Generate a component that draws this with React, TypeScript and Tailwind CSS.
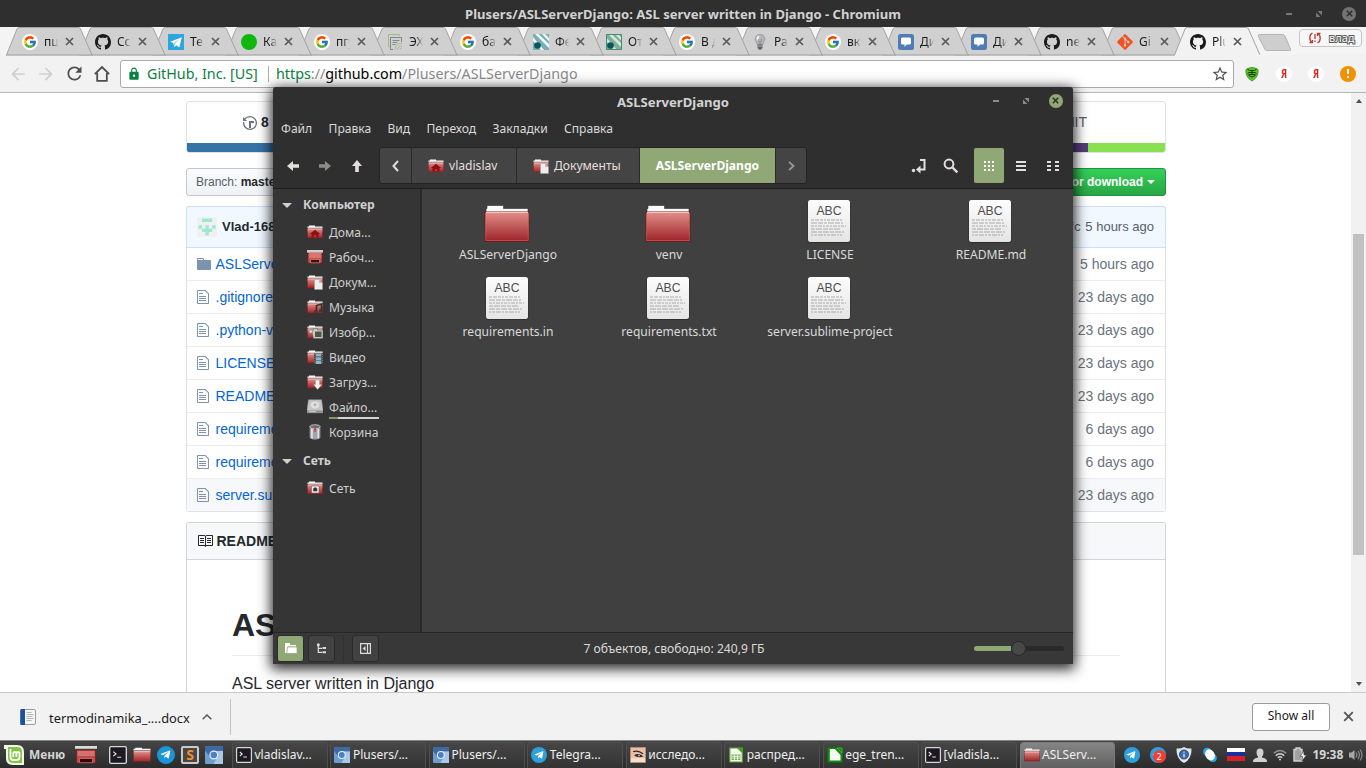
import React from "react";
import { FcGoogle } from "react-icons/fc";
import { FaGitAlt, FaTelegramPlane } from "react-icons/fa";
import { MdArrowBack, MdArrowForward, MdRefresh, MdLock, MdStarBorder } from "react-icons/md";

type Kids = { children?: React.ReactNode };

const OCTO = {
  history:
    "M8 13H6V6h5v2H8v5zM7 1C4.81 1 2.87 2.02 1.59 3.59L0 2v4h4L2.5 4.5C3.55 3.17 5.17 2.3 7 2.3c3.14 0 5.7 2.56 5.7 5.7s-2.56 5.7-5.7 5.7A5.71 5.71 0 0 1 1.3 8c0-.34.03-.67.09-1H.08C.03 7.33 0 7.66 0 8c0 3.86 3.14 7 7 7s7-3.14 7-7-3.14-7-7-7z",
  file: "M6 5H2V4h4v1zM2 8h7V7H2v1zm0 2h7V9H2v1zm0 2h7v-1H2v1zm10-7.5V14c0 .55-.45 1-1 1H1c-.55 0-1-.45-1-1V2c0-.55.45-1 1-1h7.5L12 4.5zM11 5L8 2H1v12h10V5z",
  folder:
    "M13 4H7V3c0-.66-.31-1-1-1H1c-.55 0-1 .45-1 1v10c0 .55.45 1 1 1h12c.55 0 1-.45 1-1V5c0-.55-.45-1-1-1zM6 4H1V3h5v1z",
  book: "M3 5h4v1H3V5zm0 3h4V7H3v1zm0 2h4V9H3v1zm11-5h-4v1h4V5zm0 2h-4v1h4V7zm0 2h-4v1h4V9zm2-6v9c0 .55-.45 1-1 1H9.5l-1 1-1-1H2c-.55 0-1-.45-1-1V3c0-.55.45-1 1-1h5.5l1 1 1-1H15c.55 0 1 .45 1 1zm-8 .5L7.5 3H2v9h6V3.5zm7-.5H9.500l-.5.5V12h6V3z",
  mark: "M8 0C3.58 0 0 3.58 0 8c0 3.54 2.29 6.53 5.47 7.59.4.07.55-.17.55-.38 0-.19-.01-.82-.01-1.49-2.01.37-2.53-.49-2.69-.94-.09-.23-.48-.94-.82-1.13-.28-.15-.68-.52-.01-.53.63-.01 1.08.58 1.23.82.72 1.21 1.87.87 2.33.66.07-.52.28-.87.51-1.07-1.78-.2-3.64-.89-3.64-3.95 0-.87.31-1.59.82-2.15-.08-.2-.36-1.02.08-2.12 0 0 .67-.21 2.2.82.64-.18 1.32-.27 2-.27.68 0 1.36.09 2 .27 1.53-1.04 2.2-.82 2.2-.82.44 1.1.16 1.92.08 2.12.51.56.82 1.27.82 2.15 0 3.07-1.87 3.75-3.65 3.95.29.25.54.73.54 1.48 0 1.07-.01 1.93-.01 2.2 0 .21.15.46.55.38A8.013 8.013 0 0 0 16 8c0-4.42-3.58-8-8-8z",
};

function Octicon({ d, w, className }: { d: string; w: number; className?: string }) {
  return (
    <svg width={w} height="16" viewBox={`0 0 ${w} 16`} className={className} fill="currentColor">
      <path d={d} />
    </svg>
  );
}

/* ---------- favicons ---------- */

function Favicon({ kind }: { kind: string }) {
  switch (kind) {
    case "google":
      return (
        <span className="flex size-4 items-center justify-center rounded-full bg-white">
          <FcGoogle size={14} />
        </span>
      );
    case "github":
      return <Octicon d={OCTO.mark} w={16} className="text-[#1b1b1b]" />;
    case "telegram":
      return (
        <svg width="16" height="16" viewBox="0 0 16 16">
          <path fill="#2ca5e0" d="M0 0h16v16H0z" />
          <path fill="#fff" d="M13.8 3.3 2.2 7.8l3 1.3 1.3 4 1.8-1.9 3 2.2z" />
          <path fill="#a9d5ef" d="m5.2 9.1 6.4-4-4.6 4.9-.5 3.1z" />
        </svg>
      );
    case "green":
      return <span className="size-4 rounded-full bg-[#0fb70f]" />;
    case "notes":
      return (
        <svg width="16" height="16" viewBox="0 0 16 16" fill="none">
          <path stroke="#9fc07c" d="M3 12.500H1.500V.5h11V2" />
          <path stroke="#7e8b8c" d="M6 15.500H3.500v-12h11V8M5.500 6.500h7M5.500 8.500h5M5.500 10.500h3" />
          <path stroke="#9fc07c" d="M8 15.500c0-4 3-6 7-6M10.500 15.500c0-2 2-3.500 4.500-3.500M13 15.500c0-1 1-1.500 2-1.500" />
        </svg>
      );
    case "teal":
    case "teal2":
      return (
        <svg width="16" height="16" viewBox="0 0 16 16">
          <path fill={kind === "teal" ? "#76afb5" : "#7fb09c"} d="M0 0h16v16H0z" />
          <path fill={kind === "teal" ? "#f4f7f6" : "#d6e8d8"} d="M2 0h3.500L16 10v4zM9 0h3l4 4v3.500zM0 3l11 13H8L0 7z" />
          <circle cx="4.500" cy="11.500" r="3.300" fill="#0b5560" />
          {kind === "teal2" && <path fill="none" stroke="#468a78" d="M.5.5h15v15H.5z" />}
        </svg>
      );
    case "bulb":
      return (
        <svg width="16" height="16" viewBox="0 0 16 16">
          <path fill="#b6b6ba" stroke="#8d8d92" strokeWidth=".7" d="M8 .5c3 0 4.800 2 4.800 4.500 0 2-1.500 3-2 5.500H5.200c-.5-2.500-2-3.500-2-5.500C3.200 2.500 5 .5 8 .5z" />
          <path fill="#fff" opacity=".8" d="M5 2.500c1-1 2-1 2.500-.5L6 7 4.500 5z" />
          <path fill="#66666c" d="M5.500 10.500h5v3.500L9 15.700H7L5.500 14z" />
          <path stroke="#a8a8ad" d="M5.500 12h5" />
          <path stroke="#77777b" strokeWidth=".6" fill="none" d="m6.500 5 1 5M9.500 5l-1 5" />
        </svg>
      );
    case "chat":
      return (
        <svg width="16" height="16" viewBox="0 0 16 16">
          <rect width="16" height="16" rx="2.500" fill="#4f7db3" />
          <path fill="#fff" d="M4.500 3.500h7a1.500 1.500 0 0 1 1.500 1.500v4a1.500 1.500 0 0 1-1.500 1.500H9l-2.500 2.300v-2.300h-2A1.500 1.500 0 0 1 3 9V5a1.500 1.500 0 0 1 1.500-1.500z" />
        </svg>
      );
    default:
      return <FaGitAlt size={18} color="#f4511e" className="-ml-px -mr-px shrink-0" />;
  }
}

const TABS: [string, string][] = [
  ["google", "пц"],
  ["github", "Cc"],
  ["telegram", "Те"],
  ["green", "Ка"],
  ["google", "пгу"],
  ["notes", "ЭХ"],
  ["google", "ба"],
  ["teal", "Фе"],
  ["teal2", "От"],
  ["google", "В д"],
  ["bulb", "Ра"],
  ["google", "вк"],
  ["chat", "Ди"],
  ["chat", "Ди"],
  ["github", "ne"],
  ["git", "Gi"],
  ["github", "Plu"],
];

function Cross({ size = 9, color = "#5a5a5a", w = 1.7 }: { size?: number; color?: string; w?: number }) {
  return (
    <svg width={size} height={size} viewBox="0 0 9 9" className="shrink-0">
      <path d="M1 1l7 7M8 1L1 8" stroke={color} strokeWidth={w} />
    </svg>
  );
}

function TabStrip() {
  return (
    <div className="flex h-7 shrink-0 bg-[#f4f4f4] pl-1.5">
      {TABS.map(([icon, label], i) => {
        const active = i === TABS.length - 1;
        return (
          <div key={i} className="relative h-7 w-[73px] shrink-0" style={{ zIndex: active ? 40 : 30 - i }}>
            <svg width="87" height="29" className="absolute left-0 top-0 overflow-visible">
              <path d="M.5 28.500 11 2q.8-1.500 2.300-1.500h59q1.500 0 2.200 1.500L86 28.500z" fill={active ? "#f2f2f2" : "#d0d0d0"} />
              <path d="M.5 28 11 2q.8-1.500 2.300-1.500h59q1.500 0 2.200 1.500L86 28" fill="none" stroke="#a3a3a3" />
              {!active && <path d="M0 28h87" stroke="#a0a0a0" />}
              {active && <path d="M1 28.300h84.500" stroke="#f2f2f2" strokeWidth="1.500" />}
            </svg>
            <div className="relative flex h-7 items-center pl-4 pt-[1px]">
              <Favicon kind={icon} />
              <span className="ml-[6px] w-[15px] shrink-0 overflow-hidden whitespace-nowrap text-[12px] leading-5 text-[#1a1a1a] [mask-image:linear-gradient(to_right,#000_45%,transparent_95%)]">
                {label}
              </span>
              <span className="ml-[6px] flex">
                <Cross />
              </span>
            </div>
          </div>
        );
      })}
      <div className="flex flex-1 items-start justify-between pr-[4px]">
        <svg width="36" height="18" className="ml-[9px] mt-[7px]">
          <path d="M2.500.5h23q1.800 0 2.500 1.500l5.500 13q.6 1.500-1 1.500H10q-1.600 0-2.200-1.300L1.300 2Q.8.5 2.500.5z" transform="translate(1 0)" fill="#cecece" stroke="#b4b4b4" />
        </svg>
        <div className="mt-[2px] flex h-[18px] w-[63px] items-center rounded-sm border border-[#c4c4c4] bg-[#f7f7f7] pl-2">
          <svg width="14" height="12" viewBox="0 0 14 12" fill="none" stroke="#c0392b" strokeWidth="1.300">
            <path d="M4.500 1.200C1 2.500 1 8.500 4 10.200M1.500 10.500h3V8M9.500 10.800C13 9.500 13 3.500 10 1.800M12.500 1.500h-3V4M7 2v5M7 8.500V10" />
          </svg>
          <span className="ml-[7px] text-[11px] leading-4 text-[#fafafa] [-webkit-text-stroke:2px_#5c5c5c] [paint-order:stroke]">влад</span>
        </div>
      </div>
    </div>
  );
}

function Toolbar() {
  return (
    <div className="flex h-[38px] shrink-0 items-center border-b border-[#b5b5b5] bg-[#f2f2f2] pl-2">
      <div className="flex items-center gap-2">
        <MdArrowBack size={20} color="#cfcfcf" />
        <MdArrowForward size={20} color="#cfcfcf" />
        <MdRefresh size={21} color="#4e4e4e" />
        <svg width="18" height="18" viewBox="0 0 18 18" fill="none" stroke="#4e4e4e" strokeWidth="1.800">
          <path d="M1.800 9.200 9 2l7.200 7.200M4.200 8v7.800h9.600V8" />
        </svg>
      </div>
      <div className="ml-[9px] flex h-7 w-[1114px] items-center rounded-[3px] border border-[#a9a9a9] bg-white pl-[6px]">
        <MdLock size={14} color="#0b8043" />
        <span className="ml-[6px] w-[113px] whitespace-nowrap text-[14.300px] text-[#0b8043]">GitHub, Inc. [US]</span>
        <span className="ml-[8px] h-4 w-px bg-[#b0b0b0]" />
        <span className="ml-[7px] whitespace-nowrap text-[14.300px] text-[#8a8a8a]">
          <span className="text-[#0b8043]">https</span>://<span className="text-black">github.com</span>/Plusers/ASLServerDjango
        </span>
        <MdStarBorder size={18} color="#505050" className="ml-auto mr-1" />
      </div>
      <div className="ml-[10px] flex items-center gap-4">
        <svg width="16" height="16" viewBox="0 0 16 16">
          <path fill="#5cc424" stroke="#3c8a1c" strokeWidth=".8" d="M2 3.500Q8-.5 14 3.500 15 11 8 15 1 11 2 3.500z" />
          <path stroke="#123c0a" fill="none" strokeWidth="1" d="M3.500 3l2 1.500h5l2-1.500M3.500 7.500l1.500-1h6l1.500 1M4.500 9.500q3.500 3 7 0M4.500 8.500h7M8 4.500v4" />
        </svg>
        {[0, 1].map((n) => (
          <span key={n} className="flex size-4 items-center justify-center rounded-full bg-white text-[12px] font-bold leading-none text-[#f01f1f]">
            <span className="scale-x-75">Я</span>
          </span>
        ))}
        <span className="flex size-4 flex-col items-center justify-center gap-[2px] rounded-full bg-[#f29100]">
          <span className="h-[5px] w-[2px] bg-white" />
          <span className="size-[2px] bg-white" />
        </span>
      </div>
    </div>
  );
}

/* ---------- repository page ---------- */

const ROWS: [string, string, string][] = [
  ["folder", "ASLServerDjango", "5 hours ago"],
  ["file", ".gitignore", "23 days ago"],
  ["file", ".python-version", "23 days ago"],
  ["file", "LICENSE", "23 days ago"],
  ["file", "README.md", "23 days ago"],
  ["file", "requirements.in", "6 days ago"],
  ["file", "requirements.txt", "6 days ago"],
  ["file", "server.sublime-project", "23 days ago"],
];

function Identicon() {
  return (
    <svg width="20" height="20" viewBox="0 0 20 20">
      <rect width="20" height="20" rx="2" fill="#f0f0f0" />
      <path fill="#9fe8cf" d="M5 1.500h10.200V5H5zM1.500 8.300H5v3.400H1.500zM15.200 8.300h3.400v3.400h-3.400zM8.400 8.300h3.400v3.400H8.400zM5 11.700h10.200v3.400H5zM8.400 15h3.400v3.500H8.400z" />
    </svg>
  );
}

function RepoPage() {
  return (
    <main className="flex h-[599px] shrink-0 overflow-hidden bg-white font-['Liberation_Sans',sans-serif]">
      <div className="flex w-[1166px] flex-col pl-[186px] pt-2">
        <section className="h-[52px] shrink-0 overflow-hidden rounded-[3px] border border-[#dfe2e5]">
          <div className="flex h-[41px] items-center justify-between pl-14 pr-[78px] text-[14px] text-[#586069]">
            <span className="flex items-center">
              <Octicon d={OCTO.history} w={14} className="text-[#6a737d]" />
              <b className="ml-[4px] text-[#24292e]">8</b>
            </span>
            <span>MIT</span>
          </div>
          <div className="flex h-[9px]">
            <span className="w-[760px] bg-[#3572a5]" />
            <span className="w-[141px] bg-[#563d7c]" />
            <span className="flex-1 bg-[#89e051]" />
          </div>
        </section>

        <div className="mt-[15px] flex h-7 shrink-0 justify-between">
          <div className="flex w-[130px] items-center rounded-[3px] border border-[#c5c8cb] bg-linear-to-b from-[#fafbfc] to-[#eff3f6] pl-[9px] text-[12px] text-[#586069]">
            Branch:&nbsp;<b className="text-[#24292e]">master</b>
          </div>
          <div className="flex w-[150px] items-center justify-end rounded-[3px] border border-[#229140] bg-linear-to-b from-[#34d058] to-[#28a745] pr-[10px] text-[12px] font-bold text-white">
            Clone or download
            <span className="ml-[4px] border-x-4 border-t-4 border-x-transparent border-t-white" />
          </div>
        </div>

        <section className="mt-[10px] flex shrink-0 flex-col rounded-[3px] border border-[#dfe2e5]">
          <div className="-mx-px -mt-px flex h-[42px] items-center justify-between rounded-t-[3px] border border-[#c8e1ff] bg-[#f1f8ff] px-[10px] text-[13px] text-[#586069]">
            <span className="flex items-center">
              <Identicon />
              <b className="ml-[5px] text-[#24292e]">Vlad-168</b>
            </span>
            <span className="pr-px">
              <span className="mr-[4px] font-['Liberation_Mono',monospace] text-[12px]">fc</span>5 hours ago
            </span>
          </div>
          {ROWS.map(([icon, name, age], i) => (
            <div
              key={name}
              className={
                "flex items-center justify-between pl-[10px] pr-[11px] text-[14px] text-[#6a737d] " +
                (i > 0 ? "h-[33px] border-t border-[#eaecef] " : "h-[32px] ") +
                (i === ROWS.length - 1 ? "bg-[#f6f8fa]" : "")
              }
            >
              <span className="flex items-center">
                <span className="flex w-[18.500px] text-[#7d94ae]">
                  <Octicon d={icon === "folder" ? OCTO.folder : OCTO.file} w={icon === "folder" ? 14 : 12} />
                </span>
                <span className="text-[#0366d6]">{name}</span>
              </span>
              <span>{age}</span>
            </div>
          ))}
        </section>

        <section className="mt-[10px] flex flex-1 shrink-0 flex-col rounded-t-[3px] border border-b-0 border-[#d1d5da]">
          <div className="flex h-[37px] shrink-0 items-center border-b border-[#d1d5da] bg-[#f6f8fa] pl-[10px] text-[14px] font-bold text-[#24292e]">
            <Octicon d={OCTO.book} w={16} />
            <span className="ml-[3.500px]">README.md</span>
          </div>
          <article className="mx-[45px] text-[16px] text-[#24292e]">
            <h1 className="mt-[45px] h-[51px] whitespace-nowrap border-b border-[#eaecef] text-[32px] font-bold leading-[40px]">ASLServerDjango</h1>
            <p className="mt-[16px] leading-6">ASL server written in Django</p>
          </article>
        </section>
      </div>
      <div className="ml-auto flex w-[15px] flex-col items-center bg-[#f1f1f1]">
        <span className="mt-[6px] border-x-[3.500px] border-b-4 border-x-transparent border-b-[#505050]" />
        <span className="mt-[131px] h-[321px] w-[11px] bg-[#c1c1c1]" />
        <span className="mb-[6px] mt-auto border-x-[3.500px] border-t-4 border-x-transparent border-t-[#505050]" />
      </div>
    </main>
  );
}

function DownloadShelf() {
  return (
    <footer className="flex h-[48px] shrink-0 items-center border-t border-[#c9c9c9] bg-[#f2f2f2]">
      <svg width="16" height="16" viewBox="0 0 16 16" className="ml-5">
        <rect x="2.500" y=".5" width="13" height="15" rx="1.500" fill="#f6f6f6" stroke="#9b9b9b" />
        <path fill="#1f4fa0" d="M1.500 0H5v16H1.500Q0 16 .2 14.500V1.500Q.2 0 1.500 0z" />
        <path stroke="#a5a5a5" strokeWidth=".8" d="M6.500 3.500h5M6.500 5.500h7M6.500 7.500h6M6.500 9.500h7M6.500 11.500h5" />
      </svg>
      <span className="ml-[13px] mt-[5px] w-[140px] whitespace-nowrap text-[12.850px] text-[#1a1a1a]">termodinamika_....docx</span>
      <svg width="10" height="6" viewBox="0 0 10 6" className="ml-[13px]">
        <path d="M.7 5.300 5 1l4.300 4.300" fill="none" stroke="#5a5a5a" strokeWidth="1.500" />
      </svg>
      <span className="ml-[18px] h-9 w-px bg-[#c4c4c4]" />
      <button className="ml-auto flex h-7 w-[78px] items-center justify-center rounded-[3px] border border-[#9c9c9c] bg-white pb-px text-[12px] text-[#1a1a1a]">
        Show all
      </button>
      <span className="ml-[13px] mr-[12px] flex">
        <Cross size={11} color="#555" w={1.5} />
      </span>
    </footer>
  );
}

/* ---------- file manager ---------- */

function RedFolder({ children, w = 16, h = 16 }: Kids & { w?: number; h?: number }) {
  return (
    <svg width={w} height={h} viewBox="0 0 16 16" className="shrink-0">
      <path d="M.5 2.500h1.500V1.500h6v1h7.500v5H.5z" fill="#fafafa" />
      <path d="M.5 4h15" stroke="#8f8f8f" strokeWidth=".7" />
      <rect x=".5" y="4.500" width="15" height="9.500" fill="url(#redFill)" stroke="#7d2020" strokeWidth=".5" />
      <path d="M1 5h14" stroke="#f2c4c2" strokeWidth=".9" />
      {children}
    </svg>
  );
}

function PlaceIcon({ kind }: { kind: string }) {
  switch (kind) {
    case "home":
      return (
        <RedFolder>
          <path fill="#8c1212" d="M8 5.800 2.800 10H4.500v3.500h2.300V11h2.400v2.500h2.300V10h1.700z" />
        </RedFolder>
      );
    case "desktop":
      return (
        <svg width="16" height="16" viewBox="0 0 16 16" className="shrink-0">
          <path fill="#c94f4f" stroke="#7d2020" strokeWidth=".6" d="M1 3h14v11H1z" />
          <path fill="#e08480" d="M2 4h12v5H2z" opacity=".7" />
          <path fill="#cfcfcf" d="M0 1h16v2.600H0z" />
          <path fill="#3b1113" stroke="#e79a96" strokeWidth=".6" d="M3.500 10.500h9v3.300h-9z" />
        </svg>
      );
    case "documents":
      return (
        <RedFolder>
          <path fill="#ededed" stroke="#999" strokeWidth=".4" d="M7.500 5.500h4.500l3.500 3.500V15.500h-8z" />
          <path fill="#bcbcbc" d="M12 5.500V9h3.500z" />
        </RedFolder>
      );
    case "music":
      return (
        <RedFolder>
          <path stroke="#303030" strokeWidth="1.600" fill="none" d="M9.500 13V6.500l5-1.500v6.500" />
          <circle cx="8.600" cy="13" r="1.700" fill="#3b3b3b" />
          <circle cx="13.600" cy="11.700" r="1.700" fill="#3b3b3b" />
        </RedFolder>
      );
    case "pictures":
      return (
        <RedFolder>
          <path fill="#c9c9c1" stroke="#64645e" strokeWidth=".6" d="M4.500 6h2V4.500h4V6H16v8.500H6.500z" />
          <path fill="#50544b" d="M8 7.500h6.500v5.500H8z" />
          <circle cx="3.800" cy="7.500" r="1.800" fill="#ddd" stroke="#777" strokeWidth=".6" />
        </RedFolder>
      );
    case "video":
      return (
        <RedFolder>
          <path fill="#3d4347" d="M7 4.500h9V15H7z" />
          <path fill="#8db5c4" d="M8.700 4.800h5.600v2.700H8.700zM8.700 8.200h5.600v3.200H8.700zM8.700 12h5.600v3H8.700z" />
          <path stroke="#999" strokeWidth=".7" strokeDasharray="1 1" d="M7.700 5v10M15.300 5v10" />
        </RedFolder>
      );
    case "downloads":
      return (
        <RedFolder>
          <path fill="#f4f4f4" stroke="#999" strokeWidth=".4" d="M8.500 6h4v4.500H15L10.500 15.500 6.500 10.500h2z" />
        </RedFolder>
      );
    case "disk":
      return (
        <svg width="16" height="16" viewBox="0 0 16 16" className="shrink-0">
          <path fill="#c6c6c6" stroke="#999" strokeWidth=".5" d="M1.500.8h13L16 11v2.800H0V11z" />
          <path fill="#8f8f8f" d="M0 11.500h16v2.300H0z" />
          <ellipse cx="8" cy="6" rx="5" ry="4.200" fill="#dedede" stroke="#aaa" strokeWidth=".5" />
          <circle cx="8" cy="5.800" r="1.300" fill="#aaa" />
          <path stroke="#eee" strokeWidth=".7" d="M2 12.700h7" />
        </svg>
      );
    case "trash":
      return (
        <svg width="16" height="16" viewBox="0 0 16 16" className="shrink-0">
          <path fill="#a2a2aa" stroke="#77777c" strokeWidth=".5" d="M2.800 2.500h10.400v11.500Q8 17 2.800 14z" />
          <ellipse cx="8" cy="2.700" rx="5.200" ry="2" fill="#6a6a70" stroke="#d0d0d4" strokeWidth=".8" />
          <path fill="#e0e0e5" d="M4 5h1.800v9.800L4 14.200zM10.500 5h1.500v9.200l-1.500.5z" />
          <path stroke="#c23a36" strokeWidth="1.200" fill="none" d="M8 3.500v4.500M7 5h2.200" />
        </svg>
      );
    default:
      return (
        <RedFolder>
          <path fill="#ededed" stroke="#555" strokeWidth=".5" d="M4.500 6h7.500v7H4.500z" />
          <path fill="#333" d="M6.200 8.300h4v3h-4zM7.200 7.500h2v1h-2z" />
        </RedFolder>
      );
  }
}

const PLACES: [string, string][] = [
  ["home", "Дома..."],
  ["desktop", "Рабоч..."],
  ["documents", "Докум..."],
  ["music", "Музыка"],
  ["pictures", "Изобр..."],
  ["video", "Видео"],
  ["downloads", "Загруз..."],
  ["disk", "Файло..."],
  ["trash", "Корзина"],
];

function PlaceHeader({ children }: Kids) {
  return (
    <div className="flex h-[31px] items-center pl-[9px] font-bold text-[#d0d0d0]">
      <span className="mr-[10px] mt-px border-x-[5.500px] border-t-[5.500px] border-x-transparent border-t-[#d0d0d0]" />
      <span className="pl-px">{children}</span>
    </div>
  );
}

function Place({ kind, label }: { kind: string; label: string }) {
  return (
    <div className="flex h-[25px] items-center pl-[34px] text-[#cfcfcf]">
      <span className="-mt-px flex">
        <PlaceIcon kind={kind} />
      </span>
      <span className="ml-[6px] flex w-[50px] flex-col whitespace-nowrap">
        {label}
        {kind === "disk" && (
          <span className="-mb-[2px] flex h-[2px] bg-[#d4d4d4]">
            <span className="w-[9px] bg-[#7d9d63]" />
          </span>
        )}
      </span>
    </div>
  );
}

function BigFolder() {
  return (
    <svg width="46" height="44" viewBox="0 0 46 44">
      <path d="M2 8V4.500h1V1.500h16.500v3H44V9H2z" fill="#fbfbfb" stroke="#2e2e2e" strokeWidth=".6" />
      <path d="M1 8h44v29.500H1z" fill="url(#redFill)" stroke="#6f1a1a" />
      <path d="M2 8.500h42" stroke="#f2c4c2" />
      <path d="M1.700 9v27.500h42.600V9" fill="none" stroke="#e09090" strokeWidth=".6" opacity=".6" />
    </svg>
  );
}

function TextDoc() {
  const dashes = ["3 1 4 1 3 1 2 1", "6 1 5 1 3 1", "3 1 2 1 4 1 2 1", "4 1 6 1 5 1", "6 1 4 1", "2 1 3 1 5 1"];
  const ends = [32, 33, 36, 31, 34, 32];
  return (
    <svg width="44" height="44" viewBox="0 0 44 44">
      <rect x=".5" y="1.500" width="43" height="42.500" rx="3" fill="#222" opacity=".6" />
      <rect x="1" y="1" width="42" height="42" rx="2.500" fill="url(#paper)" />
      <text x="22" y="15.700" textAnchor="middle" fontSize="12.500" fill="#4d4d4d" fontFamily="Liberation Sans, sans-serif" textLength="25" lengthAdjust="spacingAndGlyphs">
        ABC
      </text>
      {ends.map((e, i) => (
        <path key={i} d={`M4 ${21 + i * 3}H${e + 3}`} stroke="#999" strokeWidth=".8" strokeDasharray={dashes[i]} />
      ))}
    </svg>
  );
}

const FILES: [boolean, string][] = [
  [true, "ASLServerDjango"],
  [true, "venv"],
  [false, "LICENSE"],
  [false, "README.md"],
  [false, "requirements.in"],
  [false, "requirements.txt"],
  [false, "server.sublime-project"],
];

const MENU = ["Файл", "Правка", "Вид", "Переход", "Закладки", "Справка"];

function WindowButtons({ closeClass }: { closeClass: string }) {
  return (
    <div className="flex items-center">
      <span className="h-[2px] w-[6px] bg-[#8b8b8b]" />
      <svg width="6" height="6" viewBox="0 0 6 6" className="ml-[24px]">
        <path fill="#8b8b8b" d="M1.500 0H6v4.500zM0 1.500 4.500 6H0z" />
      </svg>
      <span className={"ml-[20px] flex size-[14px] items-center justify-center rounded-full " + closeClass}>
        <Cross size={7} color="#2f2f2f" w={2} />
      </span>
    </div>
  );
}

function FileManager() {
  return (
    <div className="absolute left-[273px] top-[87px] z-50 flex h-[577px] w-[800px] flex-col rounded-t-[3px] bg-[#2f2f2f] text-[12.100px] leading-[18px] text-[#dadada] shadow-[0_3px_13px_2px_rgba(0,0,0,0.85)]">
      <div className="grid h-[27px] grid-cols-3 items-center">
        <span />
        <span className="mt-[2px] text-center text-[13.100px] font-bold text-[#d2d2d2]">ASLServerDjango</span>
        <div className="flex justify-end pr-[10px]">
          <WindowButtons closeClass="bg-[#90a876]" />
        </div>
      </div>
      <nav className="flex h-[29px] items-center gap-[16.300px] pl-2">
        {MENU.map((m) => (
          <span key={m}>{m}</span>
        ))}
      </nav>
      <div className="flex h-[46px] shrink-0 items-center border-b border-[#1d1d1d] text-[#e4dfdf]">
        <div className="ml-[14px] flex items-center gap-[20px]">
          <svg width="12" height="12" viewBox="0 0 12 12" fill="#e4dfdf">
            <path d="M0 6l6-5v3.200h6v3.600H6V11z" />
          </svg>
          <svg width="12" height="12" viewBox="0 0 12 12" fill="#8e8a8a">
            <path d="M12 6 6 1v3.200H0v3.600h6V11z" />
          </svg>
          <svg width="12" height="12" viewBox="0 0 12 12" fill="#e4dfdf">
            <path d="M6 0 1 6h3.200v6h3.600V6H11z" />
          </svg>
        </div>
        <div className="ml-[16px] flex h-[37px] items-stretch rounded-[3px] border border-[#232323] bg-[#444]">
          <span className="flex w-[32px] items-center justify-center border-r border-[#2a2a2a]">
            <svg width="7" height="12" viewBox="0 0 7 12" fill="none" stroke="#e4dfdf" strokeWidth="2">
              <path d="M6 1 1.500 6 6 11" />
            </svg>
          </span>
          <span className="flex w-[105px] items-center border-r border-[#2a2a2a] pl-4">
            <PlaceIcon kind="home" />
            <span className="ml-[5px]">vladislav</span>
          </span>
          <span className="flex w-[123px] items-center border-r border-[#2a2a2a] pl-4">
            <PlaceIcon kind="documents" />
            <span className="ml-[5px]">Документы</span>
          </span>
          <span className="flex w-[135px] items-center justify-center bg-[#90a876] font-bold text-white">ASLServerDjango</span>
          <span className="flex w-[31px] items-center justify-center border-l border-[#2a2a2a]">
            <svg width="7" height="10" viewBox="0 0 7 10" fill="none" stroke="#999" strokeWidth="1.800">
              <path d="M1 .8 5.500 5 1 9.200" />
            </svg>
          </span>
        </div>
        <div className="ml-auto flex items-center pr-[14px]">
          <svg width="16" height="16" viewBox="0 0 16 16" fill="none" stroke="#e4dfdf" strokeWidth="2">
            <path d="M9 2h4.500v9.500H8" />
            <path d="M9.500 7.500v8L5 11.500z" fill="#e4dfdf" stroke="none" />
            <circle cx="2.500" cy="12.500" r="1.700" fill="#e4dfdf" stroke="none" />
          </svg>
          <svg width="16" height="16" viewBox="0 0 16 16" fill="none" stroke="#e4dfdf" className="ml-4">
            <circle cx="6" cy="6" r="4.400" strokeWidth="2" />
            <path d="m9.500 9.500 4.800 4.800" strokeWidth="2.400" />
          </svg>
          <span className="ml-[15px] flex h-[35px] w-[30px] items-center justify-center rounded-[2px] bg-[#90a876]">
            <svg width="10" height="10" viewBox="0 0 10 10" fill="#fff">
              <path d="M0 0h2v2H0zM4 0h2v2H4zM8 0h2v2H8zM0 4h2v2H0zM4 4h2v2H4zM8 4h2v2H8zM0 8h2v2H0zM4 8h2v2H4zM8 8h2v2H8z" />
            </svg>
          </span>
          <svg width="10" height="10" viewBox="0 0 10 10" fill="#e4dfdf" className="ml-3">
            <path d="M0 0h10v2H0zM0 4h10v2H0zM0 8h10v2H0z" />
          </svg>
          <svg width="14" height="10" viewBox="0 0 14 10" fill="#e4dfdf" className="ml-[20px] -mr-px">
            <path d="M1 0h4v2H1zM1 4h4v2H1zM1 8h4v2H1zM9 0h4v2H9zM9 4h4v2H9zM9 8h4v2H9z" />
          </svg>
        </div>
      </div>
      <div className="flex min-h-0 flex-1">
        <aside className="w-[149px] border-r-2 border-[#292929] bg-[#353535]">
          <PlaceHeader>Компьютер</PlaceHeader>
          {PLACES.map(([kind, label]) => (
            <Place key={kind} kind={kind} label={label} />
          ))}
          <PlaceHeader>Сеть</PlaceHeader>
          <Place kind="network" label="Сеть" />
        </aside>
        <div className="grid flex-1 auto-rows-[77px] grid-cols-[repeat(4,161px)] bg-[#404040] pl-[5px] pt-[10px]">
          {FILES.map(([dir, name]) => (
            <div key={name} className="flex flex-col items-center">
              <span className={dir ? "-ml-px mt-[5px] h-[39px]" : "-ml-px h-[44px]"}>{dir ? <BigFolder /> : <TextDoc />}</span>
              <span className="mt-[3px] whitespace-nowrap pl-px leading-[18px]">{name}</span>
            </div>
          ))}
        </div>
      </div>
      <div className="flex h-[32px] shrink-0 items-center border-t border-[#262626] bg-[#383838] pl-1 pr-[9px]">
        <span className="flex size-[27px] items-center justify-center rounded-[3px] border border-[#2b2b2b] bg-[#90a876]">
          <svg width="12" height="11" viewBox="0 0 12 11">
            <path fill="#fff" d="M0 0h5v2h6v1.500H2.500V10H0z" />
            <path fill="#fff" stroke="#90a876" strokeWidth=".7" d="M2.500 4h9.500v6.500H1.800z" />
          </svg>
        </span>
        <span className="ml-[4px] flex size-[27px] items-center justify-center rounded-[3px] border border-[#2a2a2a] bg-[#424242]">
          <svg width="11" height="11" viewBox="0 0 11 11" fill="#ddd">
            <circle cx="2.300" cy="1.700" r="1.500" />
            <path d="M1.700 2h1.200v2.700H6V6H2.900v2.700H6V10H1.700zM6.500 4H10v2H6.500zM6.500 8.300H10v2H6.500z" />
          </svg>
        </span>
        <span className="ml-[8px] h-[27px] w-px bg-[#313131]" />
        <span className="ml-[8px] flex size-[27px] items-center justify-center rounded-[3px] border border-[#2a2a2a] bg-[#424242]">
          <svg width="11" height="11" viewBox="0 0 11 11" fill="none" stroke="#ddd" strokeWidth="1.200">
            <path d="M.6.6h9.800v9.800H.6zM7.500.6v9.800" />
            <path fill="#ddd" stroke="none" d="M5.500 3v5L2.500 5.500z" />
          </svg>
        </span>
        <span className="flex-1 pr-[5px] text-center">7 объектов, свободно: 240,9 ГБ</span>
        <div className="flex w-[90px] items-center">
          <span className="h-[5px] w-[37px] rounded-l-full bg-[#90a876]" />
          <span className="size-[15px] shrink-0 rounded-full border border-[#262626] bg-[#484848]" />
          <span className="h-[5px] flex-1 rounded-r-full bg-[#2a2a2a]" />
        </div>
      </div>
    </div>
  );
}

/* ---------- taskbar ---------- */

function AppIcon({ kind, size = 16 }: { kind: string; size?: number }) {
  switch (kind) {
    case "terminal":
      return (
        <svg width={size} height={size} viewBox="0 0 16 16" className="shrink-0">
          <rect x=".6" y=".6" width="14.800" height="14.800" rx="1.200" fill="#1d1822" stroke="#d6d6d6" strokeWidth="1.200" />
          <path d="m3.800 5 2.400 2-2.400 2M7.300 10h3.500" fill="none" stroke="#e6e6e6" strokeWidth="1.100" />
        </svg>
      );
    case "chromium":
      return (
        <svg width={size} height={size} viewBox="0 0 16 16" className="shrink-0">
          <rect width="16" height="16" rx="1" fill="#6f9dd2" />
          <path fill="#3d6aa5" d="M0 0h16v4.500H8.500L4 9 0 4z" />
          <path fill="#a9c7e8" d="M8.500 4.500H16V16H7.500l3.500-6z" />
          <circle cx="7.800" cy="8" r="4" fill="#e6effa" />
          <circle cx="7.800" cy="8" r="2.900" fill="#4d80c0" />
        </svg>
      );
    case "telegram":
      return (
        <span className="flex size-4 shrink-0 items-center justify-center rounded-full bg-[#2ba0da]">
          <FaTelegramPlane size={10} color="#fff" className="-ml-px" />
        </span>
      );
    case "telegramBig":
      return (
        <span className="flex size-[18px] shrink-0 items-center justify-center rounded-full bg-[#1b95d8]">
          <FaTelegramPlane size={11} color="#fff" className="-ml-px" />
        </span>
      );
    case "eye":
      return (
        <svg width="16" height="16" viewBox="0 0 16 16" className="shrink-0">
          <path fill="#e9bfa5" stroke="#b58a72" strokeWidth=".6" d="M.3.300h15.400v15.400H.3z" />
          <path fill="#f7dccb" d="M1 11h14v4H1z" />
          <path fill="none" stroke="#3d2a22" strokeWidth="1.100" d="M3 4.800q5-2 10 2" />
          <path fill="#2c2c34" d="M4 8.300q4-3 9.500 1-5 2.500-9.500-1z" />
          <circle cx="9" cy="8.600" r="1.100" fill="#8aa4c4" />
        </svg>
      );
    case "calc":
      return (
        <svg width="16" height="16" viewBox="0 0 16 16" className="shrink-0">
          <path fill="#f7f7f7" stroke="#5aa02c" strokeWidth="1.200" d="M1.800 1h8l4.500 4.500V15H1.800z" />
          <path fill="#43a01b" d="M9.800.3H15v5.700z" />
          <path fill="#69b53c" d="M3.500 7.500h9V13h-9z" />
          <path stroke="#fff" strokeWidth=".8" d="M3.500 9.300h9M3.500 11.200h9M6.500 7.500V13M9.500 7.500V13" />
        </svg>
      );
    case "office":
      return (
        <svg width="16" height="16" viewBox="0 0 16 16" className="shrink-0">
          <path fill="#128a0e" stroke="#0b5f08" strokeWidth=".6" d="M.3.300h15.400v15.400H.3z" />
          <path fill="#f8f8f8" d="M2.800 2h5l5.700 6v5.500H2.800z" />
          <path fill="#128a0e" stroke="#9be08c" strokeWidth=".4" d="M10 1h5v5z" />
        </svg>
      );
    default:
      return <RedFolder w={size} h={size} />;
  }
}

const TASKS: [string, string][] = [
  ["terminal", "vladislav..."],
  ["chromium", "Plusers/..."],
  ["chromium", "Plusers/..."],
  ["telegram", "Telegra..."],
  ["eye", "исследо..."],
  ["calc", "распред..."],
  ["office", "ege_tren..."],
  ["terminal", "[vladisla..."],
  ["folder", "ASLServ..."],
];

function Taskbar() {
  return (
    <div className="flex h-[28px] shrink-0 items-center border-t border-[#858585] bg-linear-to-b from-[#454545] to-[#2b2b2b] text-[12px] text-[#f0f0f0]">
      <svg width="20" height="20" viewBox="0 0 20 20" className="ml-1">
        <path fill="#f2f5ec" d="M0 0h13q7 0 7 7v13H9q-7 0-7-7V4H0z" />
        <path fill="#82c341" d="M4 2h9q5 0 5 5v11H9.500Q4 18 4 12.500z" />
        <path fill="none" stroke="#fff" strokeWidth="1.800" d="M6.500 4v8q0 3 3 3h3q3 0 3-3V8.500q0-1.500-1.500-1.500t-1.600 1.500V12M12.400 9q0-2-1.600-2T9.300 8.500V12" />
      </svg>
      <span className="ml-[5px] w-[42px] text-[11.900px] font-bold text-[#d5d5d5]">Меню</span>
      <svg width="22" height="18" viewBox="0 0 22 18" className="ml-[4px]">
        <path fill="#c04848" stroke="#6f1a1a" strokeWidth=".6" d="M1.500 4h19v13h-19z" />
        <path fill="#dd827e" d="M2.500 5h17v5h-17z" opacity=".7" />
        <path fill="#dadada" d="M0 0h22v2.800H0z" />
        <path fill="#35090b" stroke="#e0908c" strokeWidth=".6" d="M4.500 12.500h13v4.200h-13z" />
      </svg>
      <div className="ml-[12px] flex w-[123px] items-center gap-[6px]">
        <AppIcon kind="terminal" size={18} />
        <AppIcon kind="folder" size={18} />
        <AppIcon kind="telegramBig" />
        <span className="flex size-[18px] items-center justify-center rounded-[2px] border-2 border-[#c9c9c9] bg-[#474747] text-[14px] font-bold leading-none text-[#f58b31]">S</span>
        <AppIcon kind="chromium" size={18} />
      </div>
      <div className="flex h-full w-[883.500px] items-end gap-[2.500px] pt-[1px]">
        {TASKS.map(([icon, label], i) => (
          <span
            key={i}
            className={
              "flex h-full min-w-0 flex-1 items-center whitespace-nowrap rounded-t-[4px] border border-b-0 pb-[2px] pl-[3px] " +
              (i === TASKS.length - 1 ? "border-[#7a7a7a] bg-linear-to-b from-[#858585] to-[#606060]" : "border-[#4f4f4f] bg-linear-to-b from-[#464646] to-[#333]")
            }
          >
            <AppIcon kind={icon} />
            <span className="ml-[2.500px]">{label}</span>
          </span>
        ))}
      </div>
      <div className="ml-[8px] flex items-center">
        <AppIcon kind="telegram" />
        <span className="relative ml-[10px] flex">
          <AppIcon kind="telegram" />
          <span className="absolute left-[3px] top-[3px] flex size-[13px] items-center justify-center rounded-full bg-[#f23c34] text-[9px] leading-none text-white">2</span>
        </span>
        <svg width="16" height="16" viewBox="0 0 16 16" className="ml-[10px]">
          <path fill="#e6e6e6" d="M8 0q3 2 7.500 1.500Q16 12 8 16 0 12 .5 1.500 5 2 8 0z" />
          <circle cx="8" cy="7.500" r="4.500" fill="#3a6db0" stroke="#24487c" />
          <path stroke="#cfe0f5" strokeWidth="1.400" d="M8 4.500v1.300M8 6.700V10.500" />
        </svg>
        <svg width="14" height="16" viewBox="0 0 14 16" className="ml-[11px]">
          <circle cx="4.200" cy="4.800" r="4" fill="#29a8e8" />
          <circle cx="9.800" cy="11" r="4" fill="#29a8e8" />
          <ellipse cx="7" cy="7.900" rx="4.600" ry="5.800" transform="rotate(-28 7 7.900)" fill="#fff" />
        </svg>
        <span className="ml-[10px] flex h-[13px] w-[18px] flex-col">
          <span className="h-[4px] bg-white" />
          <span className="h-[4px] bg-[#1a2ea0]" />
          <span className="flex-1 bg-[#d3222a]" />
        </span>
        <svg width="14" height="14" viewBox="0 0 14 14" fill="#d0d0d0" className="ml-[8px]">
          <path d="M7 .5q3.500 0 3.500 4 0 2.500-1.500 4v1q4.500.8 5 3.500v1H0v-1q.5-2.700 5-3.500v-1q-1.500-1.500-1.500-4 0-4 3.500-4z" />
        </svg>
        <svg width="14" height="12" viewBox="0 0 14 12" fill="none" stroke="#cfcfcf" strokeWidth="1.500" className="ml-[6px]">
          <path d="M.8 4.300q6.200-5.500 12.400 0" opacity=".6" />
          <path d="M2.800 6.600q4.200-3.600 8.400 0M4.800 8.700q2.200-1.800 4.400 0" />
          <circle cx="7" cy="10.500" r="1" fill="#cfcfcf" stroke="none" />
        </svg>
        <svg width="14" height="15" viewBox="0 0 14 15" className="ml-[6px]">
          <path fill="#a0a0a0" stroke="#d0d0d0" strokeWidth="1.400" d="M3 2.500V1h4v1.500h2V14H1V2.500z" />
          <path fill="#eee" stroke="#3a3a3a" strokeWidth=".6" d="M11 4 7 9.500h2.500L9 14l4.500-6H11z" />
        </svg>
        <span className="ml-[6px] w-[32px] font-bold text-[#d5d5d5]">19:38</span>
        <svg width="14" height="14" viewBox="0 0 14 14" fill="none" stroke="#8c8c8c" strokeWidth="1.200" className="ml-[4px]">
          <path fill="#a8a8a8" stroke="none" d="M0 4.500h2.500L5.500 2v10L2.500 9.500H0z" />
          <path d="M7 4.500q1.500 2.500 0 5M9 3q2.800 4 0 8M11 1.500q4 5.500 0 11" />
        </svg>
      </div>
    </div>
  );
}

export default function App() {
  return (
    <div className="relative flex h-[768px] w-[1366px] flex-col overflow-hidden bg-[#f2f2f2] font-['Noto_Sans',sans-serif]">
      <svg width="0" height="0" className="absolute">
        <defs>
          <linearGradient id="redFill" x1="0" y1="0" x2="0" y2="1">
            <stop offset="0" stopColor="#e58e8b" />
            <stop offset="1" stopColor="#9c2327" />
          </linearGradient>
          <linearGradient id="paper" x1="0" y1="0" x2="0" y2="1">
            <stop offset="0" stopColor="#fdfdfd" />
            <stop offset="1" stopColor="#e4e4e4" />
          </linearGradient>
        </defs>
      </svg>
      <header className="grid h-[27px] shrink-0 grid-cols-[1fr_auto_1fr] items-center bg-[#2f2f2f] pr-[10px]">
        <span />
        <span className="mt-[2px] whitespace-nowrap pl-[10px] text-[13.050px] font-bold text-[#d2d2d2]">
          Plusers/ASLServerDjango: ASL server written in Django - Chromium
        </span>
        <div className="flex justify-end opacity-80">
          <WindowButtons closeClass="bg-[#858585]" />
        </div>
      </header>
      <TabStrip />
      <Toolbar />
      <RepoPage />
      <DownloadShelf />
      <Taskbar />
      <FileManager />
    </div>
  );
}
